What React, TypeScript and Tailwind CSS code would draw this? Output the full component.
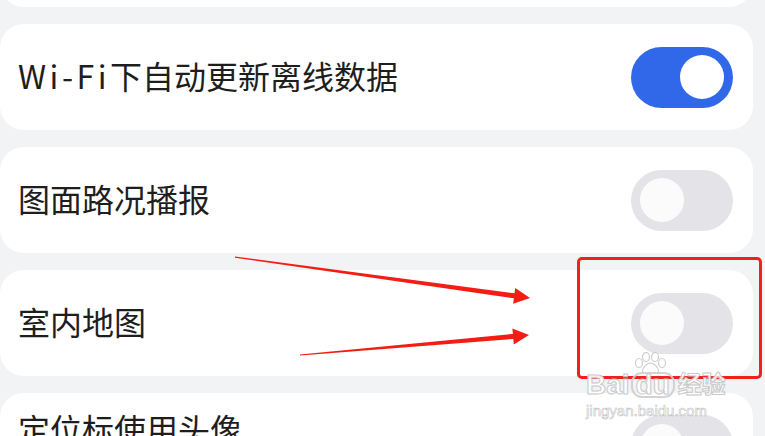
import React from "react";

type Row = { label: string; latin?: string; on: boolean; top?: boolean };

const rows: Row[] = [
  { latin: "Wi-Fi", label: "下自动更新离线数据", on: true },
  { label: "图面路况播报", on: false },
  { label: "室内地图", on: false },
  { label: "定位标使用头像", on: false, top: true },
];

function Toggle({ on, className = "" }: { on: boolean; className?: string }) {
  return (
    <div
      className={`flex h-[61px] w-[102px] shrink-0 items-center rounded-full px-[9px] ${
        on ? "justify-end bg-[#3168ea]" : "justify-start bg-[#e4e4e8]"
      } ${className}`}
    >
      <div className={`h-[44px] w-[44px] rounded-full ${on ? "bg-white" : "bg-[#fbfbfc]"}`} />
    </div>
  );
}

function Watermark() {
  return (
    <div className="pointer-events-none absolute left-[586px] top-[352px] flex flex-col items-start opacity-90 [font-family:'Liberation_Sans','Noto_Sans_CJK_SC',sans-serif]">
      <svg className="ml-[48px]" width="34" height="22" viewBox="0 0 34 22" fill="#ffffff" stroke="#c9c9c9" strokeWidth="1.2">
        <ellipse cx="5" cy="11" rx="3.5" ry="4.5" />
        <ellipse cx="12" cy="5" rx="3.5" ry="4.5" />
        <ellipse cx="21" cy="5" rx="3.5" ry="4.5" />
        <ellipse cx="28" cy="11" rx="3.5" ry="4.5" />
        <path d="M16.5 11c-4 0-8 5-8 8s3 2.5 8 2.5 8 .5 8-2.5-4-8-8-8z" />
      </svg>
      <div className="-mt-[2px] flex items-center text-[28px] font-bold leading-[26px] text-white [-webkit-text-stroke:1px_#c4c4c4]">
        <span>Bai</span>
        <span className="ml-[1px] rounded-[11px] border-2 border-[#cfcfcf] px-[3px] leading-[22px]">du</span>
        <span className="ml-[3px] text-[24px]">经验</span>
      </div>
      <div className="mt-[5px] text-[15px] leading-[15px] text-white [-webkit-text-stroke:0.6px_#bdbdbd]">
        jingyan.baidu.com
      </div>
    </div>
  );
}

export default function App() {
  return (
    <div className="relative h-[436px] w-[765px] overflow-hidden bg-[#f2f3f5] [font-family:'Noto_Sans_CJK_SC','Noto_Sans',sans-serif]">
      <div className="flex flex-col gap-[17px] pr-3">
        <div className="-mt-[99px] h-[106px] rounded-[24px] bg-white" />
        {rows.map((r) => (
          <div
            key={r.label}
            className={`flex h-[106px] shrink-0 justify-between rounded-[24px] bg-white pl-[18px] pr-5 ${
              r.top ? "items-start" : "items-center"
            }`}
          >
            <span
              className={`text-[32px] leading-none text-[#1e1e1e] ${r.top ? "mt-[19px]" : "mb-[5px]"}`}
            >
              {r.latin && <span className="tracking-[3.5px]">{r.latin}</span>}
              {r.label}
            </span>
            <Toggle on={r.on} className={r.top ? "mt-[22px]" : ""} />
          </div>
        ))}
      </div>

      <div className="pointer-events-none absolute left-[577px] top-[257px] h-[122px] w-[185px] rounded-[5px] border-[3px] border-[#f0201a]" />

      <svg className="pointer-events-none absolute left-0 top-0" width="765" height="436" viewBox="0 0 765 436">
        <polygon
          fill="#f41c14"
          points="235,256.5 514.5,293.3 515.3,287.9 530,298 513.1,303.7 513.9,298.3 235,257.8"
        />
        <polygon
          fill="#f41c14"
          points="300,354.4 512.9,333.9 512.4,328.4 529,335 513.8,344.4 513.3,338.9 300,355.6"
        />
      </svg>

      <Watermark />
    </div>
  );
}
